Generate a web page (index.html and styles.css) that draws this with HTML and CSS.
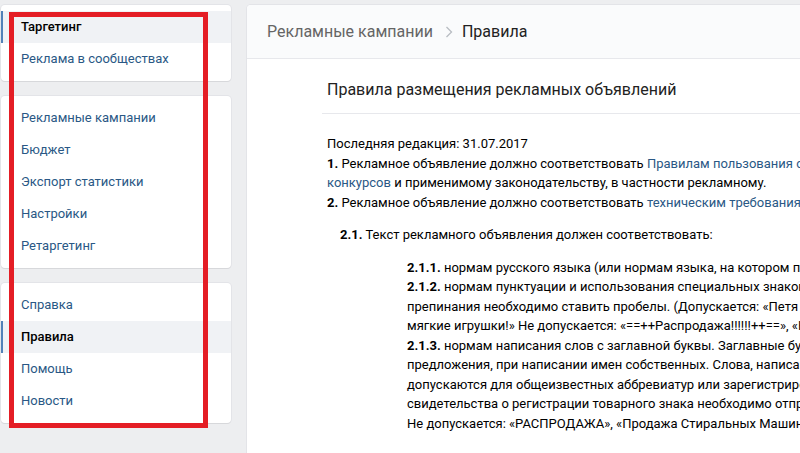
FILE: index.html
```html
<!DOCTYPE html>
<html lang="ru">
  <head>
    <meta charset="UTF-8" />
    <meta name="viewport" content="width=device-width, initial-scale=1.0" />
    <title>Правила размещения рекламных объявлений</title>
    <link rel="stylesheet" href="styles.css">
  </head>
  <body>
    <div class="page">
      <div class="side">
        <div class="side-card">
          <a class="side-item selected" href="#">Таргетинг</a>
          <a class="side-item" href="#">Реклама в сообществах</a>
        </div>
        <div class="side-card">
          <a class="side-item" href="#">Рекламные кампании</a>
          <a class="side-item" href="#">Бюджет</a>
          <a class="side-item" href="#">Экспорт статистики</a>
          <a class="side-item" href="#">Настройки</a>
          <a class="side-item" href="#">Ретаргетинг</a>
        </div>
        <div class="side-card">
          <a class="side-item" href="#">Справка</a>
          <a class="side-item selected" href="#">Правила</a>
          <a class="side-item" href="#">Помощь</a>
          <a class="side-item" href="#">Новости</a>
        </div>
        <div class="highlight"></div>
      </div>

      <div class="main">
        <div class="crumbs">
          <a class="crumb" href="#">Рекламные кампании</a>
          <span class="crumb-sep">
            <svg width="8" height="12" viewBox="0 0 8 12"><path d="M1.5 1 6.5 6l-5 5" fill="none" stroke="#b8bcc2" stroke-width="1.3"/></svg>
          </span>
          <span class="crumb-current">Правила</span>
        </div>
        <div class="rules">
          <h2 class="rules-title">Правила размещения рекламных объявлений</h2>
          <div class="rules-text">
            <p class="lines">
              Последняя редакция: 31.07.2017<br>
              <b>1.</b> Рекламное объявление должно соответствовать <a href="#">Правилам пользования сайтом</a>, <a href="#">Правилам проведения</a><br>
              <a href="#">конкурсов</a> и применимому законодательству, в частности рекламному.<br>
              <b>2.</b> Рекламное объявление должно соответствовать <a href="#">техническим требованиям</a> к рекламным объявлениям.
            </p>
            <p class="lines level2">
              <b>2.1.</b> Текст рекламного объявления должен соответствовать:
            </p>
            <p class="lines level3">
              <b>2.1.1.</b> нормам русского языка (или нормам языка, на котором привлекается аудитория);<br>
              <b>2.1.2.</b> нормам пунктуации и использования специальных знаков. После знаков<br>
              препинания необходимо ставить пробелы. (Допускается: «Петя и Маша»,<br>
              мягкие игрушки!» Не допускается: «==++Распродажа!!!!!!++==», «Купи!!!»)<br>
              <b>2.1.3.</b> нормам написания слов с заглавной буквы. Заглавные буквы допускаются в начале<br>
              предложения, при написании имен собственных. Слова, написанные заглавными буквами,<br>
              допускаются для общеизвестных аббревиатур или зарегистрированных товарных знаков (копию<br>
              свидетельства о регистрации товарного знака необходимо отправить в поддержку).<br>
              Не допускается: «РАСПРОДАЖА», «Продажа Стиральных Машин»
            </p>
          </div>
        </div>
      </div>
    </div>
  </body>
</html>
```

FILE: styles.css
```css
body {
  margin: 0;
  background-color: #edeef0;
  font-family: Roboto, "Open Sans", "DejaVu Sans", sans-serif;
  font-size: 13px;
  color: #000;
  overflow: hidden;
}
a {
  color: #2a5885;
  text-decoration: none;
}
.page {
  display: flex;
  align-items: flex-start;
  gap: 16px;
  padding: 5px 0 0 1px;
  width: 1100px;
}
.side {
  position: relative;
  width: 230px;
  flex-shrink: 0;
  display: flex;
  flex-direction: column;
  gap: 15px;
}
.side-card {
  background: #fff;
  border-radius: 4px;
  box-shadow: 0 1px 0 0 #d7d8db, 0 0 0 1px #e3e4e8;
  padding: 6px 0;
}
.side-item {
  display: block;
  height: 32px;
  line-height: 32px;
  padding-left: 18px;
  border-left: 2px solid transparent;
  color: #2a5885;
}
.side-item.selected {
  background: #f0f2f5;
  border-left-color: #5181b8;
  color: #000;
  font-weight: 500;
}
.highlight {
  position: absolute;
  left: 8px;
  top: 7px;
  width: 189px;
  height: 406px;
  border: 5px solid #e41d25;
}
.main {
  flex: 1;
  background: #fff;
  border-radius: 4px 0 0 0;
  box-shadow: 0 0 0 1px #e3e4e8;
  min-height: 600px;
}
.crumbs {
  display: flex;
  align-items: center;
  height: 53px;
  padding-left: 20px;
  background: #fafbfc;
  border-bottom: 1px solid #e7e8ec;
  border-radius: 4px 0 0 0;
  font-size: 16px;
}
.crumb {
  color: #656565;
}
.crumb-sep {
  display: flex;
  margin: 1px 9px 0 12px;
}
.crumb-current {
  color: #222;
}
.rules {
  padding: 0 0 0 75px;
}
.rules-title {
  margin: 0;
  padding: 20px 5px 0;
  height: 34px;
  font-size: 16px;
  font-weight: 400;
  color: #222;
  line-height: 22px;
  border-bottom: 1px solid #e7e8ec;
}
.rules-text {
  padding: 20px 5px;
}
.lines {
  margin: 0;
  white-space: nowrap;
  line-height: 19.5px;
}
.level2 {
  margin-top: 13px;
  padding-left: 13px;
}
.level3 {
  margin-top: 13px;
  padding-left: 80px;
}
b {
  font-weight: 700;
}
```
